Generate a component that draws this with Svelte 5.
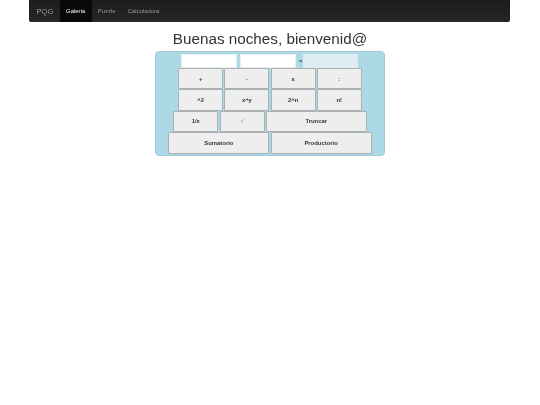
<script lang="ts">
  const links = ["Galería", "Puzzle", "Calculadora"]
  const rows = [
    [["+", ""], ["-", ""], ["x", ""], [":", ""]],
    [["^2", ""], ["x^y", ""], ["2^n", ""], ["n!", ""]],
    [["1/x", ""], ["√", "light"], ["Truncar", "wide"]],
    [["Sumatorio", "wide"], ["Productorio", "wide"]]
  ]
</script>

<main>
  <nav class="navbar">
    <span class="brand">PQG</span>
    {#each links as link, i}
      <span class="link" class:active={i === 0}>{link}</span>
    {/each}
  </nav>

  <h1>Buenas noches, bienvenid@</h1>

  <section class="calc">
    <div class="inputs">
      <div class="field"></div>
      <div class="field"></div>
      <span class="equals">=</span>
      <div class="field result"></div>
    </div>
    {#each rows as row}
      <div class="row">
        {#each row as [label, kind]}
          <button type="button" class={kind}>{label}</button>
        {/each}
      </div>
    {/each}
  </section>
</main>

<style>
  :global(body) {
    margin: 0;
    background: #fff;
    font-family: "Liberation Sans", Arial, sans-serif;
  }

  main {
    height: 405px;
    will-change: transform;
  }

  .navbar {
    display: flex;
    align-items: stretch;
    box-sizing: border-box;
    width: 481px;
    height: 22px;
    margin: 0 0 0 29px;
    background: linear-gradient(#1c1c1c, #262626);
    border-radius: 0 0 2px 2px;
    color: #999;
    font-size: 5.9px;
  }

  .brand {
    display: flex;
    align-items: center;
    padding: 0 6.5px 0 7.5px;
    font-size: 7.6px;
    color: #9a9a9a;
  }

  .link {
    display: flex;
    align-items: center;
    padding: 0 6.2px;
  }

  .link.active {
    background: #090909;
    color: #fff;
  }

  h1 {
    margin: 7px 0 0;
    height: 22px;
    font-size: 15.25px;
    line-height: 19px;
    font-weight: 400;
    text-align: center;
    color: #333;
  }

  .calc {
    box-sizing: border-box;
    width: 230px;
    height: 105px;
    margin: 0 0 0 155px;
    padding-top: 2px;
    background: #add8e6;
    border: 1px solid #a2c8d6;
    border-radius: 4px;
  }

  .inputs {
    display: flex;
    align-items: center;
    gap: 3px;
    height: 14px;
    padding-left: 25px;
  }

  .field {
    box-sizing: border-box;
    width: 56px;
    height: 14px;
    background: #fff;
    border: 1px solid #e8eff2;
  }

  .field.result {
    width: 55px;
    margin-left: -2px;
    background: #dfecf2;
    border-color: #dfecf2;
  }

  .equals {
    font-size: 5.9px;
    font-weight: 700;
    color: #333;
  }

  .row {
    display: flex;
    justify-content: center;
    gap: 1.2px;
    height: 21.4px;
  }

  button {
    box-sizing: border-box;
    width: 45px;
    padding: 0;
    background: #eee;
    border: 1px solid #aab1b4;
    border-radius: 1px;
    font: 700 5.9px "Liberation Sans", Arial, sans-serif;
    color: #333;
  }

  button.wide {
    width: 101px;
  }

  button.light {
    font-weight: 400;
    color: #777;
  }
</style>
